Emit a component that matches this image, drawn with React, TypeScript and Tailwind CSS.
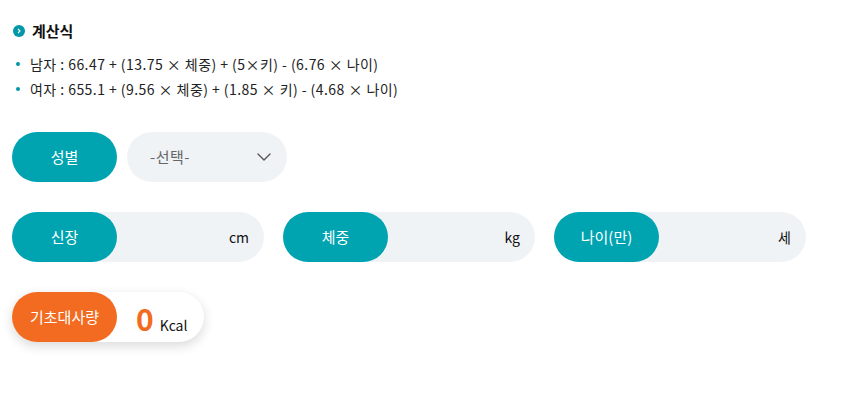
import React from 'react';

const font = { fontFamily: '"Noto Sans CJK KR", "Noto Sans", sans-serif' };

const Chevron = () => (
  <svg width="14" height="8" viewBox="0 0 14 8" fill="none">
    <path d="M1 1l6 6 6-6" stroke="#555" strokeWidth="1.4" strokeLinecap="round" strokeLinejoin="round" />
  </svg>
);

const Field = ({ label, unit }: { label: string; unit: string }) => (
  <div className="flex items-center w-[252px] h-[50px] rounded-full bg-[#f0f3f6]">
    <div className="flex items-center justify-center w-[105px] h-full rounded-full bg-[#00a3b0] text-white text-[15px]">
      {label}
    </div>
    <div className="flex-1 text-right pr-[15px] text-[14px] text-[#111]">{unit}</div>
  </div>
);

export default function App() {
  return (
    <div className="bg-white w-[854px] h-[402px] pl-3 pt-[20px] text-[#222]" style={font}>
      <div className="flex items-center gap-[7px] pl-[1px]">
        <span className="flex items-center justify-center w-[12px] h-[12px] rounded-full bg-[#0097a7]">
          <svg width="6" height="6" viewBox="0 0 6 6" fill="none">
            <path d="M2 1l2 2-2 2" stroke="white" strokeWidth="1.1" />
          </svg>
        </span>
        <span className="text-[15px] font-bold text-[#111] leading-[22px]">계산식</span>
      </div>
      <ul className="mt-[11px] flex flex-col gap-[3px] text-[14px] leading-[22px] tracking-[0.45px]">
        <li className="flex items-center gap-[10px] pl-[4px]">
          <span className="w-[4px] h-[4px] rounded-full bg-[#0097a7]" />
          <span>남자 : 66.47 + (13.75 × 체중) + (5×키) - (6.76 × 나이)</span>
        </li>
        <li className="flex items-center gap-[10px] pl-[4px]">
          <span className="w-[4px] h-[4px] rounded-full bg-[#0097a7]" />
          <span>여자 : 655.1 + (9.56 × 체중) + (1.85 × 키) - (4.68 × 나이)</span>
        </li>
      </ul>

      <div className="mt-[32px] flex items-center gap-[10px]">
        <div className="flex items-center justify-center w-[105px] h-[50px] rounded-full bg-[#00a3b0] text-white text-[15px]">
          성별
        </div>
        <div className="flex items-center justify-between w-[160px] h-[50px] rounded-full bg-[#f0f3f6] pl-[23px] pr-[16px] text-[15px] text-[#666] tracking-[0.5px]">
          <span>-선택-</span>
          <Chevron />
        </div>
      </div>

      <div className="mt-[30px] flex items-center gap-[19px]">
        <Field label="신장" unit="cm" />
        <Field label="체중" unit="kg" />
        <Field label="나이(만)" unit="세" />
      </div>

      <div className="mt-[30px] flex">
        <div className="flex items-center w-[192px] h-[50px] rounded-full bg-white shadow-[0_4px_12px_rgba(0,0,0,0.15)]">
          <div className="flex items-center justify-center w-[105px] h-full rounded-full bg-[#f26b21] text-white text-[15px]">
            기초대사량
          </div>
          <div className="flex items-baseline gap-[6px] pl-[19px] pt-[4px]">
            <span className="text-[30px] font-bold text-[#f26b21] leading-none">0</span>
            <span className="text-[14px] text-[#111]">Kcal</span>
          </div>
        </div>
      </div>
    </div>
  );
}
